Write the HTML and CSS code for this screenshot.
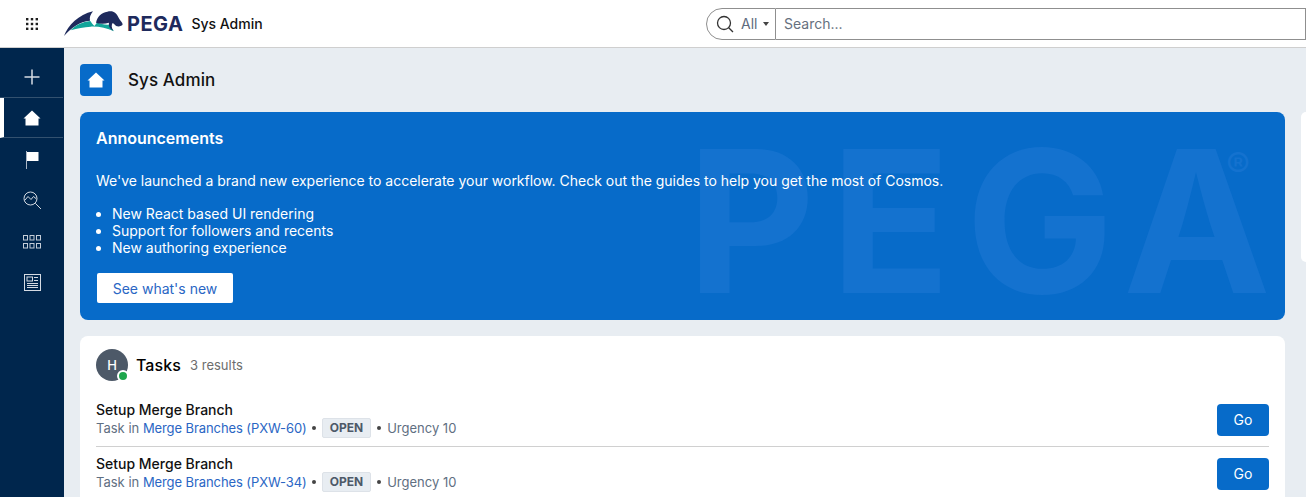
FILE: index.html
```html
<!DOCTYPE html>
<html lang="en">
<head>
<meta charset="utf-8">
<title>Sys Admin</title>
<link rel="stylesheet" href="styles.css">
</head>
<body>
<header class="topbar">
  <button class="launcher" aria-label="Apps">
    <svg width="14" height="14" viewBox="0 0 14 14" fill="#1f1f1f"><rect x="1" y="1" width="2.4" height="2.4"/><rect x="5.8" y="1" width="2.4" height="2.4"/><rect x="10.6" y="1" width="2.4" height="2.4"/><rect x="1" y="5.8" width="2.4" height="2.4"/><rect x="5.8" y="5.8" width="2.4" height="2.4"/><rect x="10.6" y="5.8" width="2.4" height="2.4"/><rect x="1" y="10.6" width="2.4" height="2.4"/><rect x="5.8" y="10.6" width="2.4" height="2.4"/><rect x="10.6" y="10.6" width="2.4" height="2.4"/></svg>
  </button>
  <svg class="logo" width="60" height="27" viewBox="192 30 180 81">
    <path fill="#1e2a5c" d="M192 108C204 76 236 44 279 34C271 44 268 52 270 62C240 64 212 84 192 108Z"/>
    <path fill="#12a59a" d="M212 91C226 76 248 65 271 63C274 68 278 73 283 78L292 67C302 73 316 76 331 74C333 81 337 88 342 94C320 84 296 79 272 80C252 81 232 85 212 91Z"/>
    <path fill="#1e2a5c" d="M288 68C292 50 304 37 322 35C332 32 341 34 345 38C351 42 354 50 358 57C362 63 367 68 368 73C367 78 358 80 351 79C346 77 343 72 338 69C334 74 334 84 340 92C330 87 325 78 327 68C314 72 299 72 288 68Z"/>
  </svg>
  <span class="wordmark">PEGA</span>
  <span class="appname">Sys Admin</span>
  <div class="search">
    <div class="search-scope">
      <svg width="18" height="18" viewBox="0 0 18 18" fill="none" stroke="#333" stroke-width="1.300"><circle cx="8" cy="8" r="6.500"/><path d="M12.700 12.700L17 17"/></svg>
      <span class="scope-label">All</span>
      <span class="caret"></span>
    </div>
    <div class="search-input">Search...</div>
  </div>
</header>
<div class="shell">
  <nav class="rail">
    <div class="rail-add">
      <svg width="16" height="16" viewBox="0 0 16 16" stroke="#d5dbe3" stroke-width="1.500"><path d="M8 .5v15M.5 8h15"/></svg>
    </div>
    <div class="rail-home">
      <svg width="18" height="16" viewBox="0 0 18 16" fill="#fff"><path d="M9 .5L17.500 8.500 15.500 8.500V15.500H2.500V8.500H.5z"/></svg>
    </div>
    <div class="rail-item">
      <svg width="16" height="18" viewBox="0 0 16 18"><path d="M2.500 0v18" stroke="#aab6c6" stroke-width="1"/><path d="M3 1h11.500v9H3z" fill="#fff"/></svg>
    </div>
    <div class="rail-item">
      <svg width="19" height="19" viewBox="0 0 19 19" fill="none" stroke="#d5dbe3" stroke-width="1"><circle cx="7.500" cy="7.500" r="6.500"/><path d="M12.300 12.300L18 18M2 9L5 5.500 8 8.500 10.500 5.500 13.500 8"/></svg>
    </div>
    <div class="rail-item">
      <svg width="18" height="14" viewBox="0 0 18 14" fill="none" stroke="#c5cdd8" stroke-width="1"><rect x=".5" y=".5" width="4" height="4.500"/><rect x="7" y=".5" width="4" height="4.500"/><rect x="13.500" y=".5" width="4" height="4.500"/><rect x=".5" y="8.500" width="4" height="4.500"/><rect x="7" y="8.500" width="4" height="4.500"/><rect x="13.500" y="8.500" width="4" height="4.500"/></svg>
    </div>
    <div class="rail-item">
      <svg width="17" height="17" viewBox="0 0 17 17" fill="none" stroke="#d5dbe3" stroke-width="1"><rect x=".5" y=".5" width="16" height="16"/><rect x="3" y="3" width="5.500" height="4"/><path d="M10 3.500H14M10 6.500H14M3 9.500H14M3 11.500H14M3 13.500H14"/></svg>
    </div>
  </nav>
  <main class="content">
    <div class="page-head">
      <span class="page-icon">
        <svg width="18" height="16" viewBox="0 0 18 16" fill="#fff"><path d="M9 .5L17.500 8.500 15.500 8.500V15.500H2.500V8.500H.5z"/></svg>
      </span>
      <h1 class="page-title">Sys Admin</h1>
    </div>
    <div class="columns">
      <div class="primary">
        <section class="banner">
          <span class="watermark" aria-hidden="true">PEGA</span>
          <span class="watermark-r" aria-hidden="true">®</span>
          <h2 class="banner-title">Announcements</h2>
          <p class="banner-text">We've launched a brand new experience to accelerate your workflow. Check out the guides to help you get the most of Cosmos.</p>
          <ul class="banner-list">
            <li>New React based UI rendering</li>
            <li>Support for followers and recents</li>
            <li>New authoring experience</li>
          </ul>
          <button class="banner-btn">See what's new</button>
        </section>
        <section class="tasks">
          <div class="tasks-head">
            <span class="avatar">H<span class="presence"></span></span>
            <h2 class="tasks-title">Tasks</h2>
            <span class="tasks-count">3 results</span>
          </div>
          <div class="task">
            <div class="task-body">
              <div class="task-name">Setup Merge Branch</div>
              <div class="task-meta"><span>Task in <a class="link">Merge Branches (PXW-60)</a></span><span class="dot dot-first"></span><span class="status">OPEN</span><span class="dot"></span>Urgency 10</div>
            </div>
            <button class="go">Go</button>
          </div>
          <div class="task">
            <div class="task-body">
              <div class="task-name">Setup Merge Branch</div>
              <div class="task-meta"><span>Task in <a class="link">Merge Branches (PXW-34)</a></span><span class="dot dot-first"></span><span class="status">OPEN</span><span class="dot"></span>Urgency 10</div>
            </div>
            <button class="go">Go</button>
          </div>
        </section>
      </div>
      <aside class="side-card"></aside>
    </div>
  </main>
</div>
</body>
</html>
```
FILE: styles.css
```css
* { box-sizing: border-box; }
html, body { margin: 0; height: 100%; overflow: hidden; }
body { font-family: Inter, "Liberation Sans", sans-serif; font-size: 14px; color: #000; background: #e8edf2; }
h1, h2, p, ul { margin: 0; padding: 0; }
button { font-family: inherit; border: 0; padding: 0; }

.topbar { height: 48px; background: #fff; border-bottom: 1px solid #cfcfcf; display: flex; align-items: center; }
.launcher { width: 64px; height: 47px; background: none; display: flex; align-items: center; justify-content: center; }
.logo { display: block; }
.wordmark { margin-left: 3px; font-size: 20px; font-weight: 700; letter-spacing: .5px; color: #1e2a5c; }
.appname { margin-left: 8px; font-size: 14px; font-weight: 500; color: #111; }
.search { margin-left: auto; width: 600px; height: 32px; display: flex; }
.search-scope { width: 70px; height: 32px; border: 1px solid #8f8f8f; border-radius: 16px 0 0 16px; display: flex; align-items: center; padding-left: 9px; }
.scope-label { margin-left: 7px; color: #5e6b7e; }
.caret { margin-left: 6px; width: 0; height: 0; border-left: 3.500px solid transparent; border-right: 3.500px solid transparent; border-top: 4px solid #444; }
.search-input { flex: 1; height: 32px; border: 1px solid #8f8f8f; border-left: 0; padding-left: 8px; line-height: 30px; color: #66707e; }

.shell { display: flex; height: 449px; }
.rail { width: 64px; flex: none; background: #00264d; display: flex; flex-direction: column; }
.rail-add { height: 50px; padding-top: 8px; display: flex; align-items: center; justify-content: center; border-bottom: 1px solid #33516f; margin-right: 1px; }
.rail-home { height: 40px; padding-top: 1px; padding-right: 3px; margin-right: 1px; display: flex; align-items: center; justify-content: center; border-bottom: 1px solid #33516f; border-left: 4px solid #fff; }
.rail-item { height: 41px; display: flex; align-items: center; justify-content: center; }
.rail-home + .rail-item { margin-top: 1px; }

.content { flex: 1; min-width: 0; padding: 16px 0 0 16px; }
.page-head { display: flex; align-items: center; height: 32px; gap: 16px; }
.page-icon { width: 32px; height: 32px; border-radius: 4px; background: #076bc9; display: flex; align-items: center; justify-content: center; }
.page-title { font-size: 17px; font-weight: 500; letter-spacing: .1px; color: #111; }
.columns { display: flex; gap: 16px; margin-top: 16px; }
.primary { width: 1205px; flex: none; display: flex; flex-direction: column; gap: 16px; }
.side-card { flex: 1; height: 150px; background: #fff; border-radius: 8px 0 0 8px; }

.banner { position: relative; overflow: hidden; height: 208px; background: #076bc9; border-radius: 8px; padding: 16px; color: #fff; }
.banner > *:not(.watermark):not(.watermark-r) { position: relative; }
.watermark { position: absolute; left: 607px; top: 37px; font-size: 198px; line-height: 144px; font-weight: 700; letter-spacing: 15px; color: #1472cf; white-space: nowrap; }
.watermark-r { position: absolute; left: 1146px; top: 33px; font-size: 36px; line-height: 40px; color: #1472cf; }
.banner-title { font-size: 16px; font-weight: 600; line-height: 21px; }
.banner-text { margin-top: 23px; line-height: 17px; letter-spacing: -.015px; }
.banner-list { margin-top: 16px; padding-left: 16px; line-height: 17px; }
.banner-btn { display: block; margin-top: 17px; margin-left: 1px; width: 136px; height: 30px; background: #fff; border-radius: 2px; color: #2a66c4; font-size: 14px; }

.tasks { background: #fff; border-radius: 8px 8px 0 0; padding: 13px 16px 0; }
.tasks-head { display: flex; align-items: center; height: 32px; margin-bottom: 12px; }
.avatar { position: relative; width: 32px; height: 32px; border-radius: 50%; background: #4d5968; color: #fff; font-size: 13px; font-weight: 500; display: flex; align-items: center; justify-content: center; }
.presence { position: absolute; right: -1px; bottom: -1px; width: 12px; height: 12px; border-radius: 50%; background: #1ea64c; border: 2px solid #fff; }
.tasks-title { margin-left: 8px; font-size: 16px; font-weight: 500; letter-spacing: .1px; }
.tasks-count { margin-left: 9px; font-size: 13px; color: #6d6d6d; }
.task { display: flex; align-items: center; height: 54px; border-bottom: 1px solid #d0d0d0; }
.task:last-child { border-bottom-color: transparent; }
.task-body { flex: 1; min-width: 0; }
.task-name { font-size: 14px; font-weight: 500; line-height: 17px; color: #111; }
.task-meta { display: flex; align-items: center; height: 20px; font-size: 13px; color: #5f6f82; white-space: pre; }
.link { color: #2a66c4; letter-spacing: -.09px; }
.dot { width: 4px; height: 4px; border-radius: 50%; background: #444; margin: 0 6px; }
.dot-first { margin-left: 5px; }
.status { height: 20px; padding: 0 7px; line-height: 18px; border: 1px solid #dde2e8; border-radius: 2px; background: #e8edf2; font-size: 12px; font-weight: 700; color: #4d5968; }
.go { width: 52px; height: 32px; background: #076bc9; border-radius: 4px; color: #fff; font-size: 14px; }
```
